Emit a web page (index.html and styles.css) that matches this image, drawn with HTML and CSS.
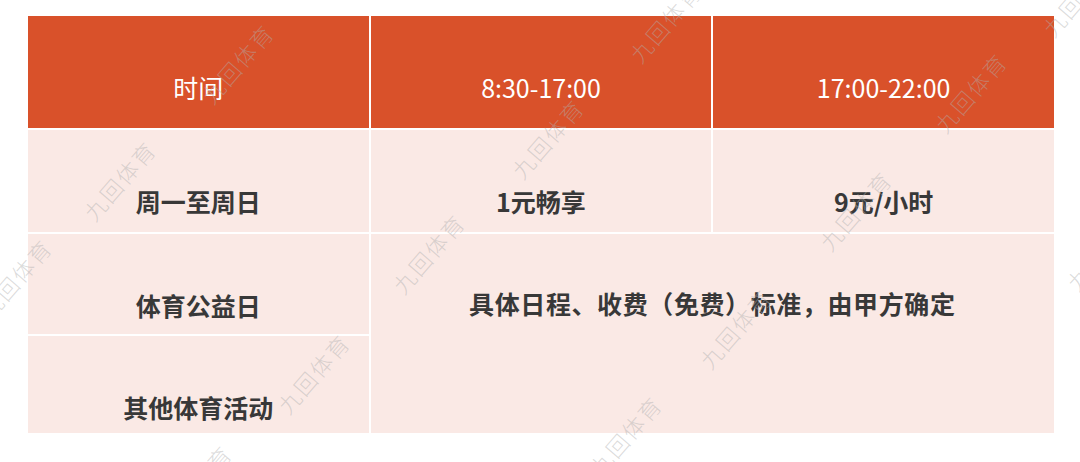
FILE: index.html
```html
<!DOCTYPE html>
<html lang="zh-CN">
<head>
<meta charset="utf-8">
<title>收费标准</title>
<link rel="stylesheet" href="styles.css">
</head>
<body>
<div class="page">
  <div class="table">
    <div class="cell head">时间</div>
    <div class="cell head">8:30-17:00</div>
    <div class="cell head">17:00-22:00</div>

    <div class="cell body">周一至周日</div>
    <div class="cell body">1元畅享</div>
    <div class="cell body">9元/小时</div>

    <div class="cell body">体育公益日</div>
    <div class="cell body merged">具体日程、收费（免费）标准，由甲方确定</div>
    <div class="cell body last">其他体育活动</div>
  </div>

  <div class="wm-layer" aria-hidden="true">
    <span class="wm wm-1">九回体育</span>
    <span class="wm wm-2">九回体育</span>
    <span class="wm wm-3">九回体育</span>
    <span class="wm wm-4">九回体育</span>
    <span class="wm wm-5">九回体育</span>
    <span class="wm wm-6">九回体育</span>
    <span class="wm wm-7">九回体育</span>
    <span class="wm wm-8">九回体育</span>
    <span class="wm wm-9">九回体育</span>
    <span class="wm wm-10">九回体育</span>
    <span class="wm wm-11">九回体育</span>
    <span class="wm wm-12">九回体育</span>
    <span class="wm wm-13">九回体育</span>
    <span class="wm wm-14">九回体育</span>
  </div>
</div>
</body>
</html>
```

FILE: styles.css
```css
html, body {
  margin: 0;
  padding: 0;
  background: #ffffff;
}

.page {
  position: relative;
  width: 1080px;
  height: 462px;
  overflow: hidden;
  padding: 16px 0 0 28px;
  box-sizing: border-box;
  font-family: "Noto Sans CJK SC", "Noto Sans", sans-serif;
}

.table {
  width: 1026px;
  display: grid;
  grid-template-columns: repeat(3, 1fr);
  grid-template-rows: 112px 102px 100px 97px;
  gap: 2px;
  background: #ffffff;
}

.cell {
  box-sizing: border-box;
  text-align: center;
  font-size: 25px;
  line-height: 36px;
  padding-top: 53px;
}

.head {
  background: #d9512a;
  color: #ffffff;
  font-weight: 400;
}

.body {
  background: #fae9e5;
  color: #383838;
  font-weight: 700;
  padding-top: 53px;
}

.merged {
  grid-column: 2 / span 2;
  grid-row: 3 / span 2;
  padding-top: 51px;
  letter-spacing: 0.6px;
}

.last {
  grid-column: 1;
  grid-row: 4;
}

.wm-layer {
  position: absolute;
  inset: 0;
  pointer-events: none;
}

.wm {
  position: absolute;
  transform: translate(-50%, -50%) rotate(-49deg);
  white-space: nowrap;
  font-family: "Noto Sans CJK SC", sans-serif;
  font-weight: 300;
  font-size: 22px;
  letter-spacing: 2px;
  line-height: 1;
  color: rgba(175, 175, 175, 0.45);
}

.wm-1 { left: 237px; top: 63px; }
.wm-2 { left: 119px; top: 180px; }
.wm-3 { left: 547px; top: 138px; }
.wm-4 { left: 665px; top: 22px; }
.wm-5 { left: 428px; top: 253px; }
.wm-6 { left: 970px; top: 92px; }
.wm-7 { left: 1078px; top: -4px; }
.wm-8 { left: 855px; top: 210px; }
.wm-9 { left: 15px; top: 278px; }
.wm-10 { left: 313px; top: 373px; }
.wm-11 { left: 735px; top: 328px; }
.wm-12 { left: 625px; top: 435px; }
.wm-13 { left: 195px; top: 484px; }
.wm-14 { left: 1102px; top: 250px; }
```
